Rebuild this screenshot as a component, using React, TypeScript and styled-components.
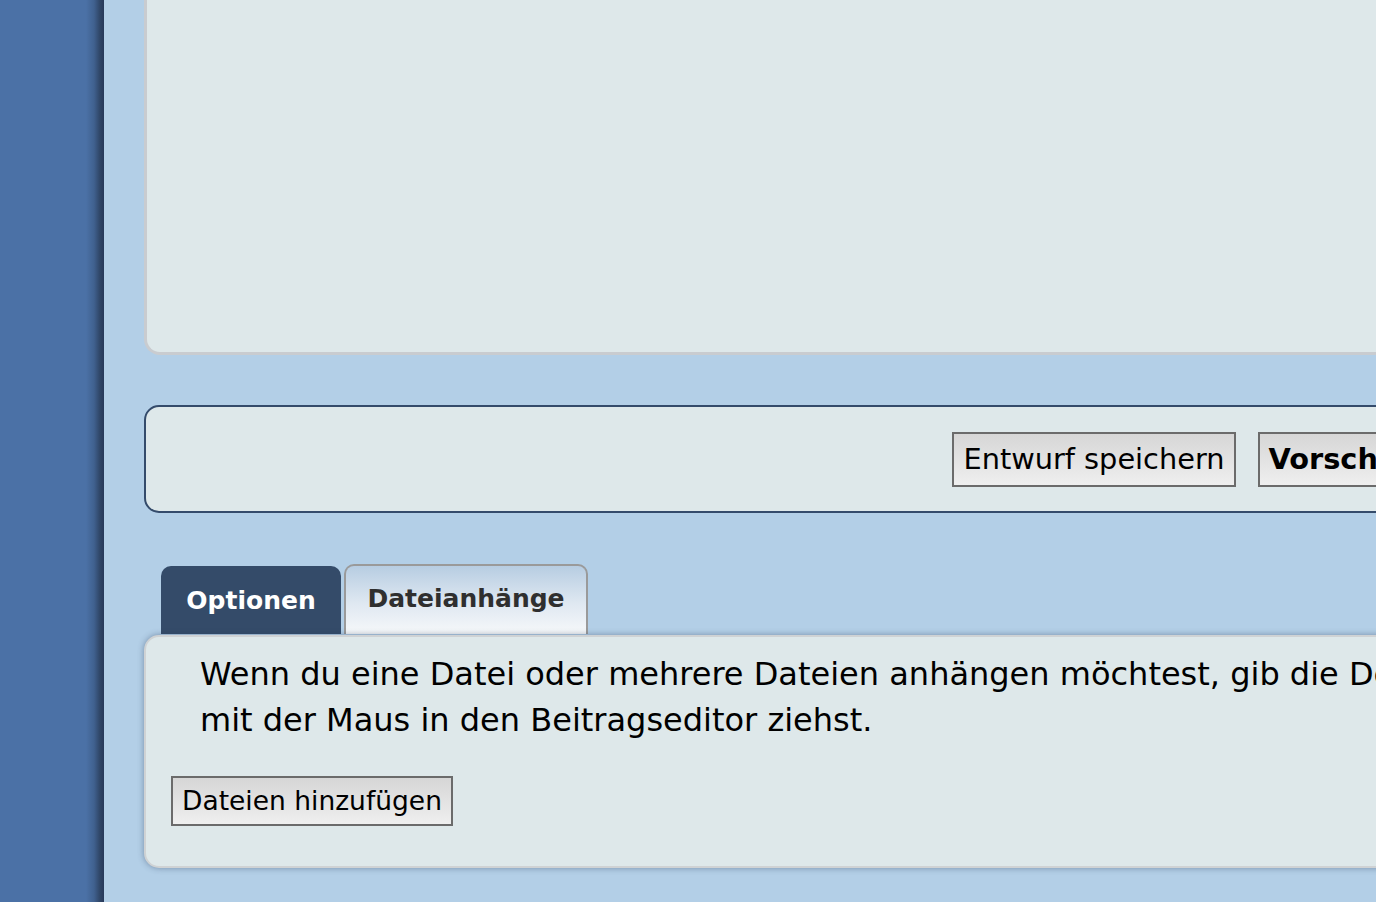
import React from "react";
import styled, { createGlobalStyle } from "styled-components";

const Global = createGlobalStyle`
  html, body { margin: 0; padding: 0; }
  body {
    background: #b3cfe7;
    font-family: "DejaVu Sans", "Liberation Sans", sans-serif;
    overflow: hidden;
  }
`;

const Page = styled.div`
  display: flex;
  width: 1376px;
  height: 902px;
  overflow: hidden;
  background: #b3cfe7;
`;

const SideBar = styled.div`
  flex: 0 0 104px;
  background: linear-gradient(
    to right,
    #4b71a6 0,
    #4b71a6 86px,
    #40618f 94px,
    #2f4566 100px,
    #27395a 104px
  );
`;

const Main = styled.div`
  flex: 0 0 2298px;
  min-width: 0;
  display: flex;
  flex-direction: column;
  padding-left: 40px;
`;

const EditorPanel = styled.div`
  height: 352px;
  background: #dee8ea;
  border-left: 3px solid #c9ccd0;
  border-bottom: 3px solid #c9ccd0;
  border-bottom-left-radius: 16px;
`;

const ActionPanel = styled.div`
  margin-top: 50px;
  height: 104px;
  background: #dee8ea;
  border: 2px solid #344b6b;
  border-radius: 15px;
  display: flex;
  align-items: center;
  justify-content: center;
  gap: 22px;
`;

const Button = styled.button<{ $bold?: boolean; $size: number; $h: number }>`
  font-family: "DejaVu Sans", "Liberation Sans", sans-serif;
  font-size: ${(p) => p.$size}px;
  font-weight: ${(p) => (p.$bold ? 700 : 400)};
  color: #000;
  height: ${(p) => p.$h}px;
  padding: 0 9px;
  border: 2px solid #6b6b6b;
  border-radius: 0;
  background: linear-gradient(to bottom, #d6d6d6, #efefef);
  line-height: 1;
  white-space: nowrap;
`;

const TabRow = styled.div`
  margin-top: 51px;
  display: flex;
  align-items: flex-end;
  gap: 3px;
  padding-left: 17px;
`;

const Tab = styled.div<{ $active?: boolean }>`
  box-sizing: border-box;
  display: flex;
  align-items: center;
  justify-content: center;
  font-weight: 700;
  font-size: 25px;
  border-radius: 10px 10px 0 0;
  ${(p) =>
    p.$active
      ? `
    width: 180px;
    height: 68px;
    background: #344b69;
    color: #ffffff;
  `
      : `
    width: 244px;
    height: 70px;
    padding-bottom: 4px;
    background: linear-gradient(to bottom, #b7cde2 0%, #dfe8f1 55%, #f6f8fa 100%);
    color: #2f2f2f;
    border: 2px solid #9a9a9a;
    border-bottom: none;
  `}
`;

const AttachPanel = styled.div`
  margin-top: 1px;
  height: 201px;
  min-width: 0;
  overflow: hidden;
  background: #dee8ea;
  border: 2px solid #cfd2d4;
  border-radius: 15px;
  box-shadow: 0 0 6px rgba(40, 60, 90, 0.45);
  padding: 14px 25px;
  box-sizing: content-box;
`;

const Explain = styled.p`
  margin: 0 0 0 29px;
  font-size: 32px;
  line-height: 46px;
  color: #000;
  white-space: nowrap;
`;

const AddRow = styled.div`
  margin-top: 33px;
  display: flex;
`;

export default function App() {
  return (
    <>
      <Global />
      <Page>
        <SideBar />
        <Main>
          <EditorPanel />
          <ActionPanel>
            <Button $size={28.8} $h={55}>Entwurf speichern</Button>
            <Button $size={28.8} $h={55} $bold>Vorschau</Button>
            <Button $size={28.8} $h={55} $bold>Absenden</Button>
          </ActionPanel>
          <TabRow>
            <Tab $active>Optionen</Tab>
            <Tab>Dateianhänge</Tab>
          </TabRow>
          <AttachPanel>
            <Explain>
              Wenn du eine Datei oder mehrere Dateien anhängen möchtest, gib die Details
              unten ein. Du kannst Dateien auch hinzufügen, indem du sie
              <br />
              mit der Maus in den Beitragseditor ziehst.
            </Explain>
            <AddRow>
              <Button $size={26.5} $h={50}>Dateien hinzufügen</Button>
            </AddRow>
          </AttachPanel>
        </Main>
      </Page>
    </>
  );
}
